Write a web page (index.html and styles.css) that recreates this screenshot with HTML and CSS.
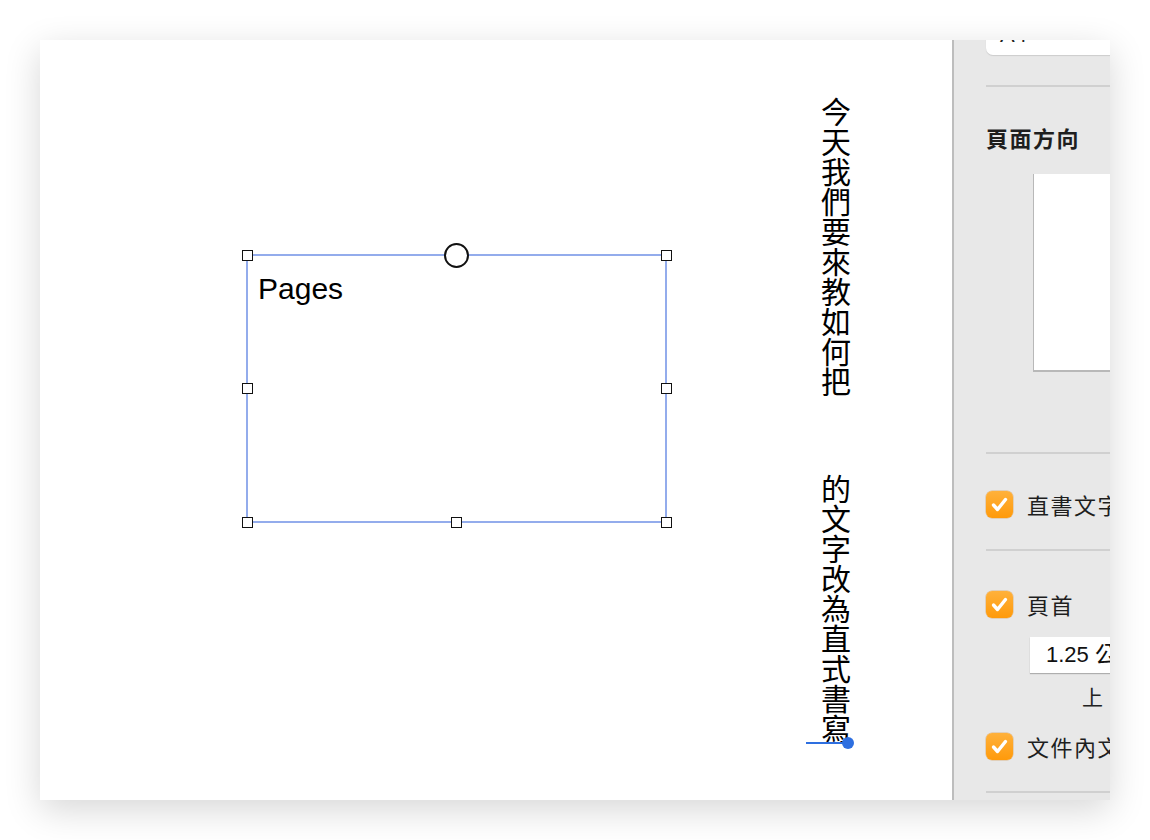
FILE: index.html
```html
<!DOCTYPE html>
<html lang="zh-Hant">
<head>
  <meta charset="UTF-8">
  <title>Pages 直式書寫</title>
  <link rel="stylesheet" href="styles.css">
</head>
<body>
  <div class="window">
    <div class="canvas">
      <div class="text-box">
        <div class="text-box-content">Pages</div>
        <span class="handle h-tl"></span>
        <span class="handle h-tr"></span>
        <span class="handle h-ml"></span>
        <span class="handle h-mr"></span>
        <span class="handle h-bl"></span>
        <span class="handle h-bm"></span>
        <span class="handle h-br"></span>
        <span class="rotate-handle"></span>
      </div>

      <div class="vertical-text">
        <div class="v-line">今天我們要來教如何把</div>
        <div class="v-line second">的文字改為直式書寫</div>
      </div>
      <div class="text-cursor"></div>
    </div>

    <div class="sidebar">
      <div class="size-field">A4</div>
      <div class="divider first"></div>

      <div class="section-title">頁面方向</div>
      <div class="orientation-preview"></div>
      <div class="divider orient"></div>

      <div class="check-row vertical-row">
        <span class="checkbox">
          <svg viewBox="0 0 27 27" width="27" height="27"><path d="M7.5 14 L11.5 18.5 L19.5 8.5" fill="none" stroke="#fff" stroke-width="3.4" stroke-linecap="round" stroke-linejoin="round"/></svg>
        </span>
        <span class="check-label">直書文字</span>
      </div>
      <div class="divider after-vertical"></div>

      <div class="check-row header-row">
        <span class="checkbox">
          <svg viewBox="0 0 27 27" width="27" height="27"><path d="M7.5 14 L11.5 18.5 L19.5 8.5" fill="none" stroke="#fff" stroke-width="3.4" stroke-linecap="round" stroke-linejoin="round"/></svg>
        </span>
        <span class="check-label">頁首</span>
      </div>
      <div class="margin-field">1.25 公分</div>
      <div class="margin-caption">上</div>

      <div class="check-row body-row">
        <span class="checkbox">
          <svg viewBox="0 0 27 27" width="27" height="27"><path d="M7.5 14 L11.5 18.5 L19.5 8.5" fill="none" stroke="#fff" stroke-width="3.4" stroke-linecap="round" stroke-linejoin="round"/></svg>
        </span>
        <span class="check-label">文件內文</span>
      </div>
      <div class="divider last"></div>
    </div>
  </div>
</body>
</html>
```

FILE: styles.css
```css
* {
  margin: 0;
  padding: 0;
  box-sizing: border-box;
}

body {
  background: #ffffff;
  font-family: 'Noto Sans CJK TC', 'Liberation Sans', sans-serif;
  width: 1150px;
  height: 840px;
  overflow: hidden;
}

.window {
  margin: 40px 0 0 40px;
  width: 1070px;
  height: 760px;
  display: flex;
  overflow: hidden;
  background: #ffffff;
  box-shadow: 0 10px 34px rgba(0, 0, 0, 0.16);
}

/* page canvas */

.canvas {
  flex: 0 0 912px;
  position: relative;
  background: #ffffff;
}

.text-box {
  position: absolute;
  left: 206px;
  top: 214px;
  width: 421px;
  height: 269px;
  border: 2px solid #93acec;
}

.text-box-content {
  font-family: 'Liberation Sans', Arial, sans-serif;
  font-size: 30px;
  line-height: 36px;
  color: #000;
  padding: 15px 0 0 10px;
}

.handle {
  position: absolute;
  width: 11px;
  height: 11px;
  background: #fff;
  border: 1px solid #111;
}

.h-tl { left: -6.5px; top: -6.5px; }
.h-tr { right: -6.5px; top: -6.5px; }
.h-ml { left: -6.5px; top: 127px; }
.h-mr { right: -6.5px; top: 127px; }
.h-bl { left: -6.5px; bottom: -6.5px; }
.h-bm { left: 203px; bottom: -6.5px; }
.h-br { right: -6.5px; bottom: -6.5px; }

.rotate-handle {
  position: absolute;
  left: 196px;
  top: -13.5px;
  width: 25px;
  height: 25px;
  border-radius: 50%;
  background: #fff;
  border: 2px solid #111;
}

.vertical-text {
  position: absolute;
  left: 781px;
  top: 57px;
  display: flex;
  flex-direction: column;
}

.v-line {
  writing-mode: vertical-rl;
  font-family: 'Noto Sans CJK TC', sans-serif;
  font-size: 30px;
  line-height: 30px;
  color: #000;
}

.v-line.second {
  margin-top: 77px;
}

.text-cursor {
  position: absolute;
  left: 766px;
  top: 702px;
  width: 42px;
  height: 2px;
  background: #2e6fe0;
}

.text-cursor::after {
  content: '';
  position: absolute;
  right: -6px;
  top: -5px;
  width: 12px;
  height: 12px;
  border-radius: 50%;
  background: #2e6fe0;
}

/* inspector sidebar */

.sidebar {
  flex: 1;
  background: #e8e8e8;
  border-left: 2px solid #bdbdbd;
  padding-left: 32px;
  display: flex;
  flex-direction: column;
  color: #222;
}

.size-field {
  margin-top: -26px;
  height: 41px;
  width: 220px;
  background: #fff;
  border-radius: 7px;
  box-shadow: 0 1px 1px rgba(0, 0, 0, 0.12);
  font-family: 'Liberation Sans', 'Noto Sans CJK TC', sans-serif;
  font-size: 22px;
  line-height: 30px;
  padding-left: 14px;
  padding-top: 6px;
}

.divider {
  height: 2px;
  width: 220px;
  background: #d0d0d0;
  flex: none;
}

.divider.first { margin-top: 30px; }

.section-title {
  margin-top: 35px;
  font-size: 22px;
  line-height: 30px;
  font-weight: 700;
  letter-spacing: 1.5px;
  color: #1e1e1e;
}

.orientation-preview {
  margin: 22px 0 0 47px;
  width: 160px;
  height: 198px;
  background: #fff;
  border-left: 1px solid #b8b8b8;
  border-bottom: 2px solid #b8b8b8;
  flex: none;
}

.divider.orient { margin-top: 80px; }

.check-row {
  display: flex;
  align-items: center;
  gap: 14px;
  white-space: nowrap;
}

.vertical-row { margin-top: 35px; }
.header-row { margin-top: 38px; }
.body-row { margin-top: 20px; }

.checkbox {
  flex: none;
  width: 27px;
  height: 27px;
  border-radius: 6px;
  background: linear-gradient(180deg, #ffb13b 0%, #ff9a0a 100%);
  box-shadow: 0 0 0 0.5px rgba(200, 110, 0, 0.4);
  display: flex;
}

.check-label {
  font-size: 22px;
  line-height: 30px;
  letter-spacing: 1.5px;
  color: #1e1e1e;
}

.divider.after-vertical { margin-top: 30px; }

.margin-field {
  margin: 18px 0 0 44px;
  width: 200px;
  height: 36px;
  background: #fff;
  box-shadow: 0 1px 1px rgba(0, 0, 0, 0.25);
  font-family: 'Liberation Sans', 'Noto Sans CJK TC', sans-serif;
  font-size: 22px;
  line-height: 36px;
  padding-left: 16px;
  white-space: nowrap;
  color: #111;
}

.margin-caption {
  margin: 8px 0 0 96px;
  font-size: 21px;
  line-height: 30px;
  color: #222;
}

.divider.last { margin-top: 30px; }
```
